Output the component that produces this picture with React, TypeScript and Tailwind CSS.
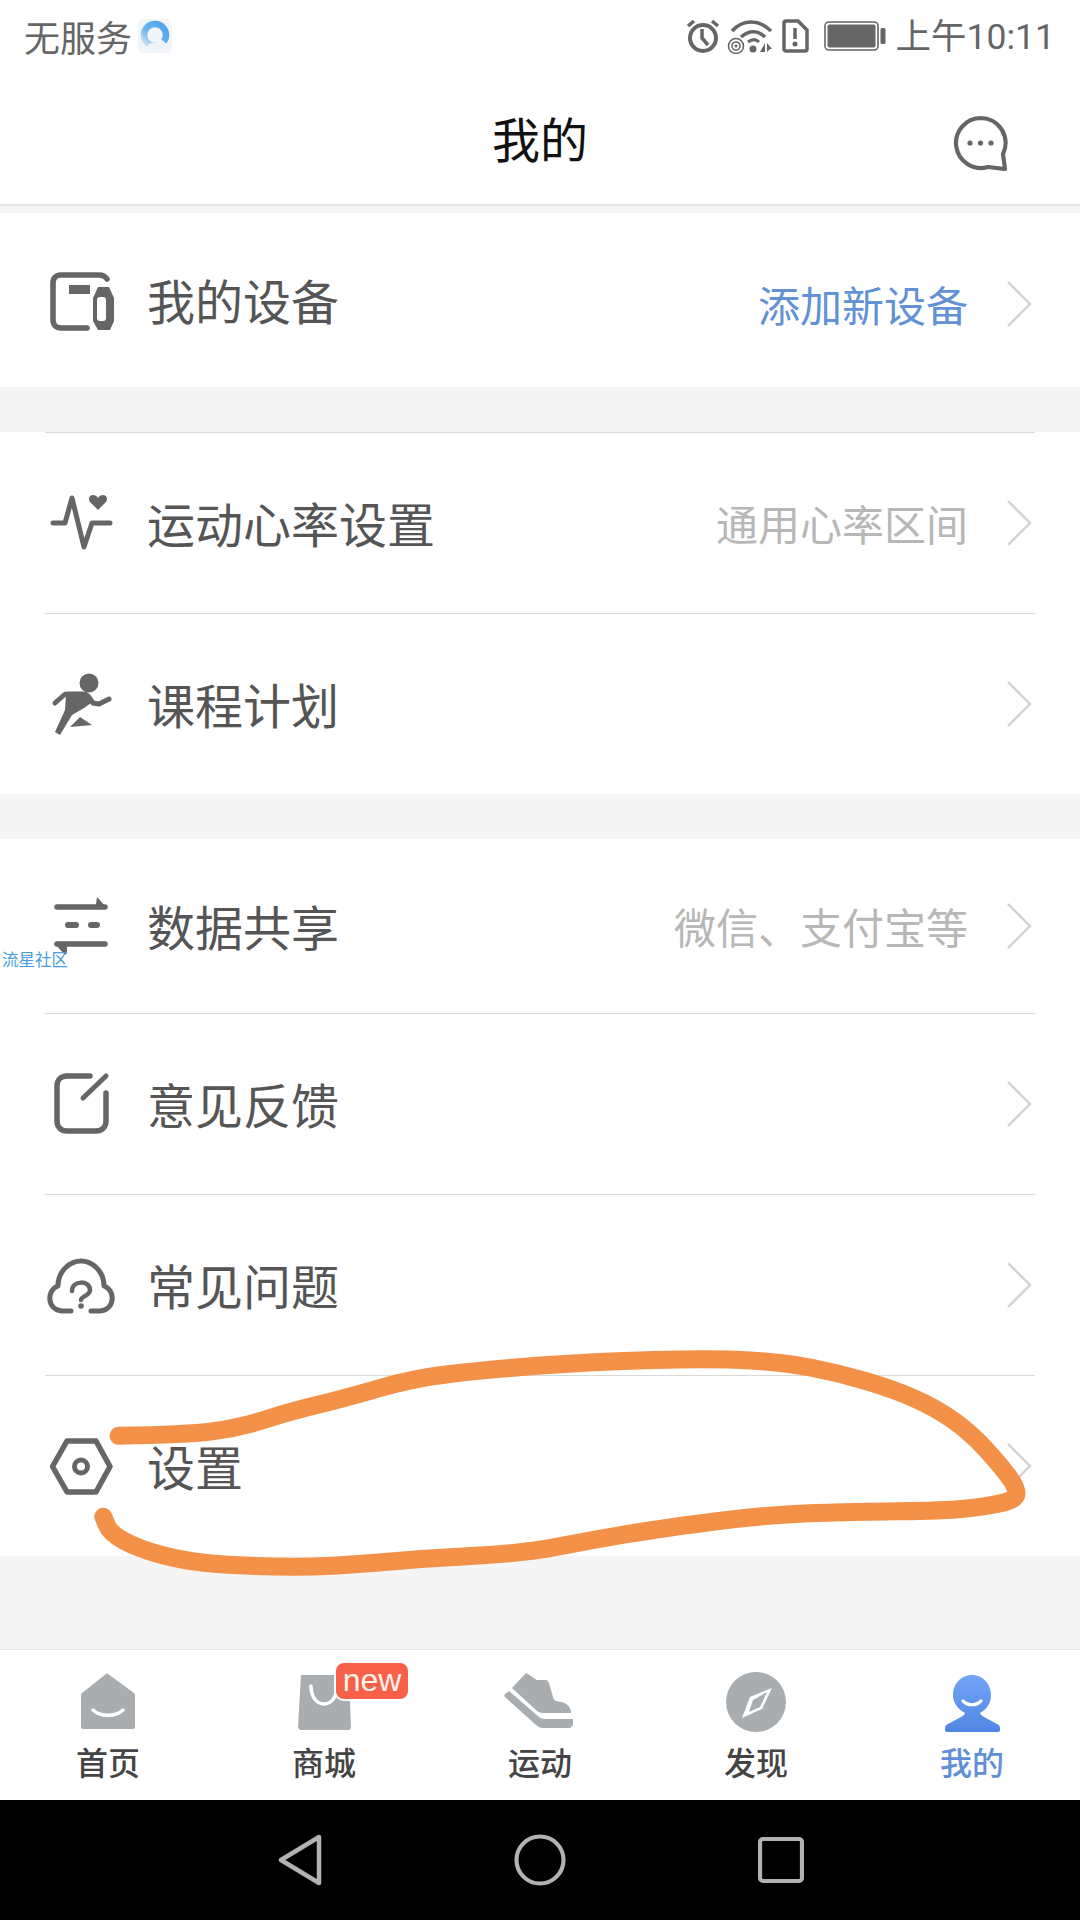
import React from "react";

const G = "#666666";

const strokePoints: [number, number][] = [
  [172, 287], [270, 285], [350, 262], [420, 215], [500, 175], [600, 115], [700, 90], [860, 65],
  [1040, 55], [1140, 68], [1220, 100], [1300, 150], [1360, 205], [1410, 280], [1450, 370],
  [1476, 440], [1476, 480], [1430, 500], [1370, 512], [1240, 515], [1110, 525], [960, 565],
  [860, 600], [760, 640], [620, 655], [480, 680], [370, 680], [270, 665], [200, 625], [160, 580], [150, 530],
];

function smoothPath(points: [number, number][]) {
  const p = points.map(([x, y]) => [x / 1.452, 1340 + y / 3]);
  let d = `M${p[0][0].toFixed(1)} ${p[0][1].toFixed(1)}`;
  for (let i = 1; i < p.length - 1; i++) {
    const mx = (p[i][0] + p[i + 1][0]) / 2;
    const my = (p[i][1] + p[i + 1][1]) / 2;
    d += ` Q${p[i][0].toFixed(1)} ${p[i][1].toFixed(1)} ${mx.toFixed(1)} ${my.toFixed(1)}`;
  }
  const last = p[p.length - 1];
  d += ` L${last[0].toFixed(1)} ${last[1].toFixed(1)}`;
  return d;
}

function RowIcon({ cy, children }: { cy: number; children: React.ReactNode }) {
  return (
    <svg width={102} height={80} viewBox={`45 ${cy - 40} 102 80`} className="shrink-0">
      {children}
    </svg>
  );
}

function Chevron() {
  return (
    <svg width={28} height={48} viewBox="0 0 28 48" className="shrink-0">
      <path d="M3 2 L25 24 L3 46" fill="none" stroke="#d2d2d2" strokeWidth={2.4} />
    </svg>
  );
}

function Row({
  cy,
  icon,
  label,
  value,
  valueClass,
  border,
  tall,
  shift,
}: {
  cy: number;
  icon: React.ReactNode;
  label: string;
  value?: string;
  valueClass?: string;
  border?: boolean;
  tall?: boolean;
  shift?: boolean;
}) {
  return (
    <div
      className={`mx-[45px] flex items-center ${tall ? "h-[181px]" : "h-[174px]"} ${
        border ? "border-t border-[#d9d9d9]" : ""
      }`}
    >
      <RowIcon cy={cy}>{icon}</RowIcon>
      <span className="flex-1 pb-[2px] text-[48px] leading-none text-[#555555]">{label}</span>
      <div className={`flex items-center ${shift ? "pt-[8px]" : ""}`}>
        {value ? <span className={`text-[42px] leading-none ${valueClass}`}>{value}</span> : null}
        <span className="ml-[37px] mr-[2px] flex">
          <Chevron />
        </span>
      </div>
    </div>
  );
}

function Tab({
  label,
  active,
  children,
  badge,
}: {
  label: string;
  active?: boolean;
  children: React.ReactNode;
  badge?: boolean;
}) {
  return (
    <div className="relative flex flex-col items-center">
      <div className="mt-[22px] flex h-[64px] w-[80px] justify-center">{children}</div>
      <span
        className={`mt-[5px] text-[32px] leading-[40px] font-medium ${
          active ? "text-[#5f8fd8]" : "text-[#444444]"
        }`}
      >
        {label}
      </span>
      {badge ? (
        <span className="absolute left-[118px] top-[11px] flex h-[40px] w-[76px] items-center justify-center rounded-[10px] border-2 border-white bg-[#f9604a] pb-[3px] text-[32px] leading-none text-[#fff3ea] [font-family:'Liberation_Sans',sans-serif]">
          new
        </span>
      ) : null}
    </div>
  );
}

export default function App() {
  return (
    <div className="relative flex h-[1920px] w-[1080px] flex-col overflow-hidden bg-[#f5f5f5] [font-family:'Noto_Sans_CJK_SC',sans-serif]">
      {/* status + title */}
      <div className="flex h-[206px] flex-col border-b-2 border-[#e4e4e4] bg-white">
        <div className="flex h-[76px] items-center justify-between pb-[4px] pl-[24px] pr-[25px] text-[#666666]">
          <div className="flex items-center">
            <span className="text-[36px] leading-none">无服务</span>
            <svg width={38} height={36} viewBox="0 0 38 36" className="ml-[4px]">
              <defs>
                <linearGradient id="ring" x1="1" y1="0" x2="0" y2="1">
                  <stop offset="0" stopColor="#4ea3ec" />
                  <stop offset="0.6" stopColor="#6db6f0" />
                  <stop offset="1" stopColor="#d6e9f7" />
                </linearGradient>
              </defs>
              <rect x="2" y="1" width="34" height="34" rx="5" fill="#f3f6f9" />
              <circle cx="19" cy="17" r="11" fill="none" stroke="url(#ring)" strokeWidth="6.5" />
              <path d="M11 31c0-5 4-7 8-6 2-4 9-4 10 0 3 0 5 2 5 6z" fill="#eef4f9" />
            </svg>
          </div>
          <div className="flex items-center">
            <svg width={34} height={36} viewBox="0 0 34 36">
              <circle cx="17" cy="20" r="13" fill="none" stroke={G} strokeWidth="4" />
              <path d="M16 11v9l6 7" fill="none" stroke={G} strokeWidth="3.5" />
              <path d="M2 8l6-5M32 8l-6-5" stroke={G} strokeWidth="3.5" />
            </svg>
            <svg width={46} height={36} viewBox="0 0 46 36" className="ml-[7px]">
              <path d="M5 13C16 1 32 1 44 13" fill="none" stroke={G} strokeWidth="3.5" />
              <path d="M14 19c8-7 17-7 24 0" fill="none" stroke={G} strokeWidth="3.5" />
              <path d="M21 24c4-3 8-3 11 0" fill="none" stroke={G} strokeWidth="3" />
              <circle cx="26" cy="31" r="3.5" fill={G} />
              <circle cx="9" cy="28" r="7.5" fill="none" stroke={G} strokeWidth="1.6" />
              <circle cx="9" cy="28" r="4" fill="none" stroke={G} strokeWidth="1.6" />
              <circle cx="9" cy="28" r="1.5" fill={G} />
              <path d="M38 25v9h-5zM40 25l5 6h-5zM40 34v-3h3z" fill={G} />
            </svg>
            <svg width={27} height={34} viewBox="0 0 27 34" className="ml-[9px]">
              <path d="M4 2h12l9 9v19a2 2 0 0 1-2 2H4a2 2 0 0 1-2-2V4a2 2 0 0 1 2-2z" fill="none" stroke={G} strokeWidth="3.5" />
              <path d="M13 9v11" stroke={G} strokeWidth="3.5" />
              <circle cx="13" cy="25" r="2.5" fill={G} />
            </svg>
            <svg width={62} height={30} viewBox="0 0 62 30" className="ml-[15px]">
              <rect x="1" y="1" width="53" height="28" rx="4" fill="none" stroke={G} strokeWidth="1.6" />
              <rect x="3.5" y="3.5" width="48" height="23" rx="2" fill={G} />
              <rect x="56.5" y="7" width="5" height="16" rx="1.5" fill={G} />
            </svg>
            <span className="ml-[10px] text-[35.5px] leading-none">
              上午<span className="[font-family:Roboto,sans-serif]">10:11</span>
            </span>
          </div>
        </div>
        <div className="grid flex-1 grid-cols-[1fr_auto_1fr] items-center">
          <span />
          <span className="pb-[6px] text-[48px] leading-none text-[#111111]">我的</span>
          <div className="flex justify-end pr-[71px] pt-[6px]">
            <svg width={56} height={56} viewBox="0 0 56 56">
              <path
                d="M28 3a25 25 0 1 0 7 49l17 2-2-15A25 25 0 0 0 28 3z"
                fill="none"
                stroke={G}
                strokeWidth="4.2"
                strokeLinejoin="round"
              />
              <circle cx="17" cy="28" r="2.6" fill={G} />
              <circle cx="27.5" cy="28" r="2.6" fill={G} />
              <circle cx="38" cy="28" r="2.6" fill={G} />
            </svg>
          </div>
        </div>
      </div>

      {/* card 1 */}
      <div className="mt-[7px] bg-white">
        <Row
          cy={300}
          shift
          label="我的设备"
          value="添加新设备"
          valueClass="text-[#6291d6]"
          icon={
            <>
              <path d="M107 279c-2-3-5-4-8-4H61c-5 0-8 3-8 8v37c0 5 3 8 8 8h26" fill="none" stroke={G} strokeWidth="5.6" strokeLinecap="round" />
              <rect x="69" y="285" width="21" height="9" fill={G} />
              <path fillRule="evenodd" d="M98 287h11l5 11v23l-4 9H98l-5-9v-23zM100 297a3 3 0 0 0-3 3v18a3 3 0 0 0 3 3h3a3 3 0 0 0 3-3v-18a3 3 0 0 0-3-3z" fill={G} />
            </>
          }
        />
      </div>

      {/* card 2 */}
      <div className="mt-[45px] bg-white">
        <Row
          tall
          border
          cy={523}
          label="运动心率设置"
          value="通用心率区间"
          valueClass="text-[#b7b7b7]"
          icon={
            <>
              <path d="M53 523h12l7-25 12 49 8-24h18" fill="none" stroke={G} strokeWidth="5" strokeLinecap="round" strokeLinejoin="round" />
              <path d="M98 510l-8-8c-2-3-1-7 3-7 2 0 4 1 5 3 1-2 3-3 5-3 4 0 5 4 3 7z" fill={G} />
            </>
          }
        />
        <Row
          tall
          border
          cy={704}
          label="课程计划"
          icon={
            <>
              <circle cx="89" cy="683" r="9.5" fill={G} />
              <path d="M55 703l9-8c1-1 2-1 3-1h17c2 0 3 1 4 2l5 7 6 1 10-5" fill="none" stroke={G} strokeWidth="5" strokeLinecap="round" strokeLinejoin="round" />
              <path d="M66 694h22l3 9-7 5-12 7-12 20-5-3 10-22z" fill={G} />
              <path d="M70 727l10-10 12 8z" fill={G} />
            </>
          }
        />
      </div>

      {/* card 3 */}
      <div className="mt-[45px] bg-white">
        <Row
          cy={926}
          label="数据共享"
          value="微信、支付宝等"
          valueClass="text-[#b7b7b7]"
          icon={
            <>
              <path d="M57 907h48" stroke={G} strokeWidth="5.5" strokeLinecap="round" />
              <path d="M96 904l1-7 10 11-11 1z" fill={G} />
              <path d="M68 925h8M91 925h6" stroke={G} strokeWidth="6" strokeLinecap="round" />
              <path d="M57 944h48" stroke={G} strokeWidth="5.5" strokeLinecap="round" />
              <path d="M55 944h12v9l-2 2z" fill={G} />
            </>
          }
        />
        <Row
          tall
          border
          cy={1104}
          label="意见反馈"
          icon={
            <>
              <path d="M90 1076H67c-6 0-10 4-10 10v35c0 6 4 10 10 10h29c6 0 10-4 10-10v-28" fill="none" stroke={G} strokeWidth="5.5" strokeLinecap="round" />
              <path d="M83 1098l23-22" stroke={G} strokeWidth="5" strokeLinecap="round" />
            </>
          }
        />
        <Row
          tall
          border
          cy={1285}
          label="常见问题"
          icon={
            <>
              <path d="M71 1311H62c-15-1-16-21-4-25 0-16 13-25 23-25s23 9 23 25c12 4 11 24-4 25h-9" fill="none" stroke={G} strokeWidth="5" strokeLinecap="round" strokeLinejoin="round" />
              <path d="M72 1291c0-11 18-11 18-1 0 6-9 6-9 10" fill="none" stroke={G} strokeWidth="4.5" strokeLinecap="round" />
              <circle cx="81" cy="1306" r="2.8" fill={G} />
            </>
          }
        />
        <Row
          tall
          border
          cy={1465}
          label="设置"
          icon={
            <>
              <path d="M67 1440h29l14 25.5-14 25.5H67l-14.5-25.5z" fill="none" stroke={G} strokeWidth="5.5" strokeLinejoin="round" />
              <circle cx="81" cy="1465.5" r="6.5" fill="none" stroke={G} strokeWidth="5" />
            </>
          }
        />
      </div>

      <div className="flex-1" />

      {/* tab bar */}
      <div className="grid h-[151px] grid-cols-5 border-t border-[#e6e6e6] bg-white">
        <Tab label="首页">
          <svg width={56} height={58} viewBox="0 0 56 58">
            <path d="M28 2l26 19c1 1 1 1 1 3v31c0 1-1 2-2 2H3c-1 0-2-1-2-2V24c0-2 0-2 1-3L26 2c1-1 1-1 2 0z" fill="#a9adb0" />
            <path d="M13 38c7 7 23 7 30 0" fill="none" stroke="#fff" strokeWidth="3.5" strokeLinecap="round" />
          </svg>
        </Tab>
        <Tab label="商城" badge>
          <svg width={54} height={58} viewBox="0 0 54 58" className="ml-[2px] mt-[3px]">
            <path d="M3 0h48l2 52c0 1-1 3-2 3H3c-1 0-3-2-3-3z" fill="#a9adb0" />
            <path d="M13 11c0 24 26 24 26 0" fill="none" stroke="#fff" strokeWidth="3.5" strokeLinecap="round" />
          </svg>
        </Tab>
        <Tab label="运动">
          <svg width={72} height={60} viewBox="0 0 72 60">
            <path d="M8 16L21 2c1-1 2-1 3 0l9 6h9c1 0 2 1 3 3l4 14c1 4 3 4 8 5 6 1 9 5 10 9v2H39c-3 0-5-1-7-3z" fill="#a9adb0" />
            <path d="M5 19l30 26c2 1 3 2 6 2h28v5c0 2-2 4-4 4H39c-3 0-5-1-7-3L1 25c-1-1-1-2 0-3z" fill="#a9adb0" />
          </svg>
        </Tab>
        <Tab label="发现">
          <svg width={60} height={60} viewBox="0 0 60 60">
            <circle cx="30" cy="30" r="30" fill="#a9adb0" />
            <path d="M46 16L36 37 16 46l8-21z" fill="#fff" />
            <path d="M41 20l-7 15-11 5 4-12z" fill="#a9adb0" />
          </svg>
        </Tab>
        <Tab label="我的" active>
          <svg width={56} height={58} viewBox="0 0 56 58" className="mt-[3px]">
            <defs>
              <linearGradient id="p" x1="0" y1="0" x2="0" y2="1">
                <stop offset="0" stopColor="#73a4f8" />
                <stop offset="1" stopColor="#5086e2" />
              </linearGradient>
            </defs>
            <path d="M28 0c11 0 19 9 19 20 0 8-4 14-11 18 0 1 2 3 4 4l13 7c2 1 3 2 3 4v2c0 1-1 2-2 2H3c-1 0-2-1-2-2v-2c0-2 1-3 3-4l13-7c2-1 4-3 4-4-7-4-12-10-12-18C9 9 17 0 28 0z" fill="url(#p)" />
            <path d="M19 26c5 5 13 5 18 0" fill="none" stroke="#fff" strokeWidth="3.2" strokeLinecap="round" />
          </svg>
        </Tab>
      </div>

      {/* system nav */}
      <div className="flex h-[120px] items-center justify-center bg-black">
        <svg width={46} height={52} viewBox="0 0 46 52" className="ml-[2px]">
          <path d="M3 26L41 3v46z" fill="none" stroke="#b2b2b2" strokeWidth="4.5" strokeLinejoin="round" />
        </svg>
        <svg width={52} height={52} viewBox="0 0 52 52" className="ml-[190px]">
          <circle cx="26" cy="26" r="23.5" fill="none" stroke="#b2b2b2" strokeWidth="4.2" />
        </svg>
        <svg width={46} height={48} viewBox="0 0 46 48" className="ml-[192px]">
          <rect x="2" y="3" width="42" height="42" rx="3" fill="none" stroke="#b2b2b2" strokeWidth="4.2" />
        </svg>
      </div>

      {/* watermark over content */}
      <span className="absolute left-[2px] top-[947px] text-[16.5px] leading-[24px] text-[#4a9de0]">流星社区</span>

      {/* hand-drawn annotation */}
      <svg className="pointer-events-none absolute left-0 top-0" width={1080} height={1920} viewBox="0 0 1080 1920">
        <path
          d={smoothPath(strokePoints)}
          fill="none"
          stroke="#f39149"
          strokeWidth="18"
          strokeLinecap="round"
          strokeLinejoin="round"
        />
      </svg>
    </div>
  );
}
